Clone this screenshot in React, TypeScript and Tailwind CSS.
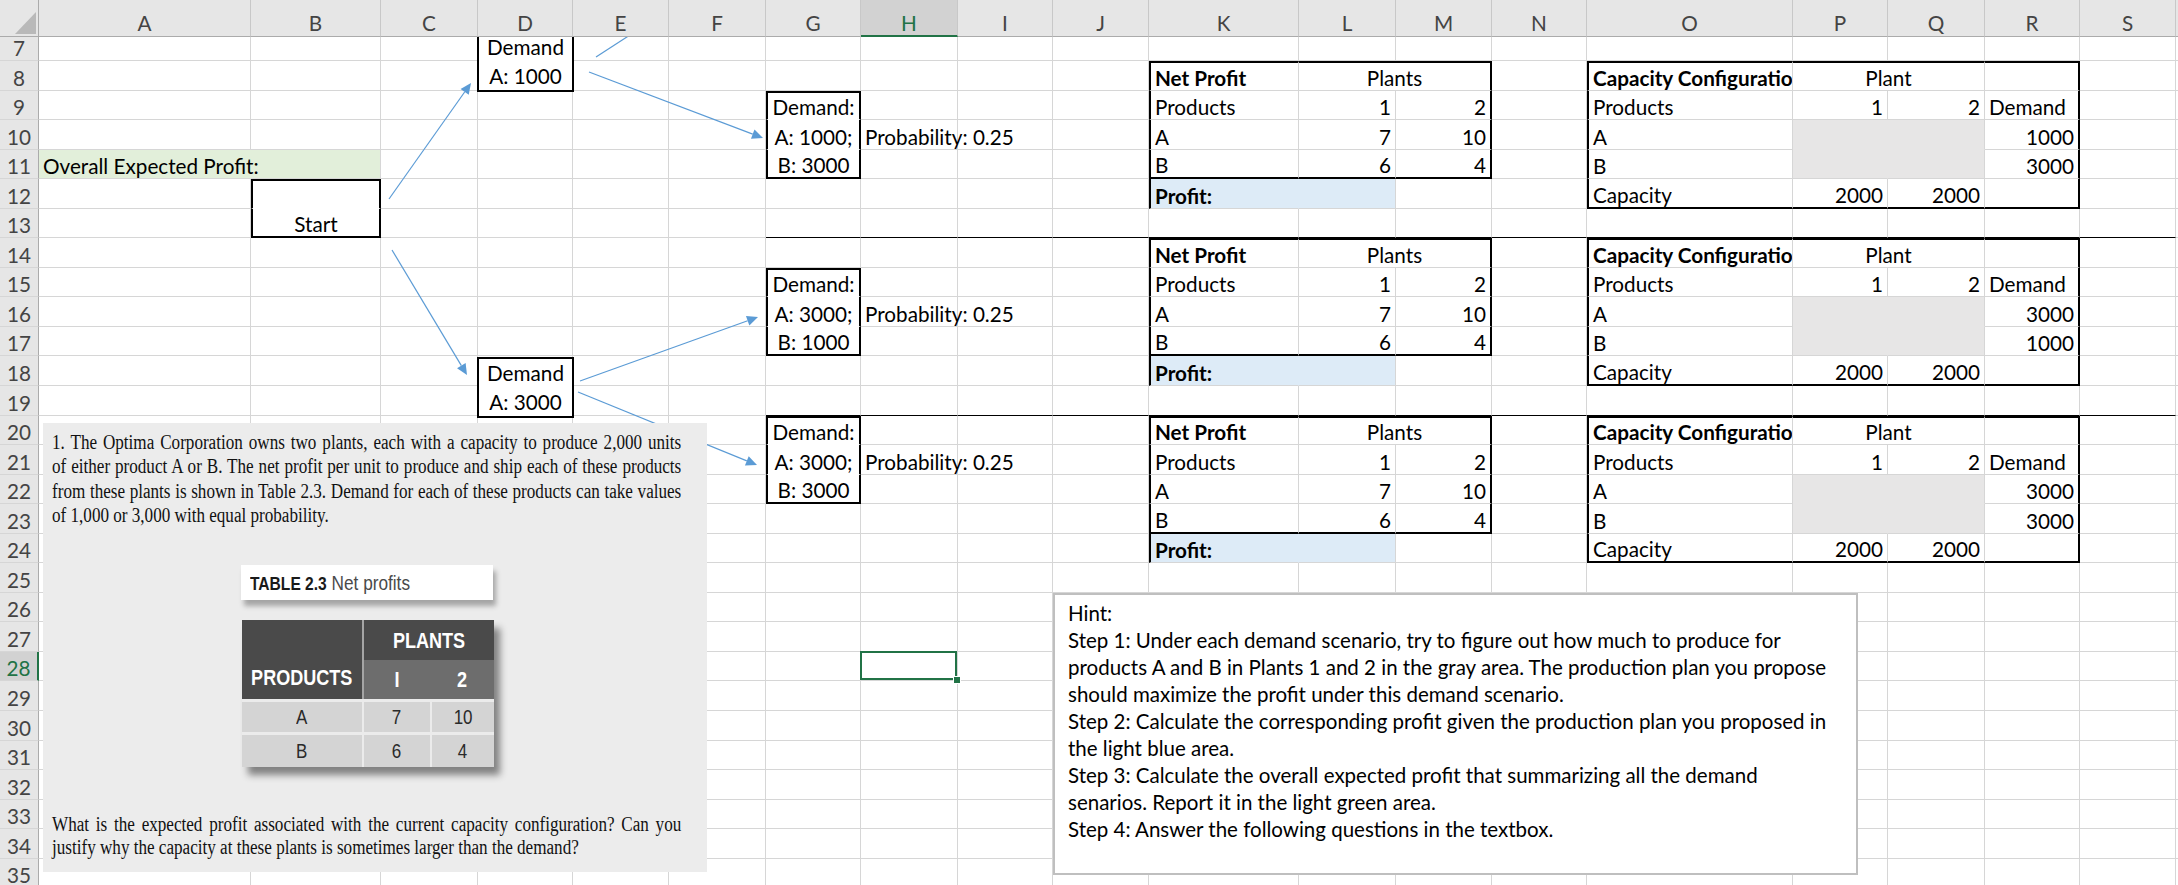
import React from "react";

const LETTERS = ["A","B","C","D","E","F","G","H","I","J","K","L","M","N","O","P","Q","R","S","T"];
const col = (l: string) => LETTERS.indexOf(l);

type Fill = { bg: string; br: string; bb: string };
const GREEN: Fill = { bg: "bg-[#e2efda]", br: "border-r-[#e2efda]", bb: "border-b-[#e2efda]" };
const BLUE: Fill = { bg: "bg-[#ddebf7]", br: "border-r-[#ddebf7]", bb: "border-b-[#ddebf7]" };
const GRAY: Fill = { bg: "bg-[#e7e6e6]", br: "border-r-[#e7e6e6]", bb: "border-b-[#e7e6e6]" };
const WHITE: Fill = { bg: "bg-white", br: "border-r-white", bb: "border-b-white" };

type Cell = { t?: string; a?: "l" | "r" | "c"; b?: boolean; span?: number; fill?: Fill; clip?: boolean };
const cells: Record<string, Cell> = {};
const key = (l: string, r: number) => `${l}${r}`;
const put = (l: string, r: number, c: Cell) => {
  cells[key(l, r)] = { ...(cells[key(l, r)] || {}), ...c };
};

put("A", 11, { t: "Overall Expected Profit:", fill: GREEN });
put("B", 11, { fill: GREEN });
put("B", 12, { fill: WHITE });
put("B", 13, { t: "Start", a: "c", fill: WHITE });

const SCEN = [
  { r0: 8, g: 9, dA: "1000", dB: "3000" },
  { r0: 14, g: 15, dA: "3000", dB: "1000" },
  { r0: 20, g: 20, dA: "3000", dB: "3000" },
];

for (const s of SCEN) {
  const r = s.r0;
  put("K", r, { t: "Net Profit", b: true });
  put("L", r, { t: "Plants", a: "c", span: 2 });
  put("K", r + 1, { t: "Products" });
  put("L", r + 1, { t: "1", a: "r" });
  put("M", r + 1, { t: "2", a: "r" });
  put("K", r + 2, { t: "A" });
  put("L", r + 2, { t: "7", a: "r" });
  put("M", r + 2, { t: "10", a: "r" });
  put("K", r + 3, { t: "B" });
  put("L", r + 3, { t: "6", a: "r" });
  put("M", r + 3, { t: "4", a: "r" });
  put("K", r + 4, { t: "Profit:", b: true, fill: BLUE });
  put("L", r + 4, { fill: BLUE });

  put("O", r, { t: "Capacity Configuration", b: true, clip: true });
  put("P", r, { t: "Plant", a: "c", span: 2 });
  put("O", r + 1, { t: "Products" });
  put("P", r + 1, { t: "1", a: "r" });
  put("Q", r + 1, { t: "2", a: "r" });
  put("R", r + 1, { t: "Demand" });
  put("O", r + 2, { t: "A" });
  put("P", r + 2, { fill: GRAY });
  put("Q", r + 2, { fill: GRAY });
  put("R", r + 2, { t: s.dA, a: "r" });
  put("O", r + 3, { t: "B" });
  put("P", r + 3, { fill: GRAY });
  put("Q", r + 3, { fill: GRAY });
  put("R", r + 3, { t: s.dB, a: "r" });
  put("O", r + 4, { t: "Capacity" });
  put("P", r + 4, { t: "2000", a: "r" });
  put("Q", r + 4, { t: "2000", a: "r" });

  const g = s.g;
  put("G", g, { t: "Demand:", a: "c", fill: WHITE });
  put("G", g + 1, { t: `A: ${s.dA};`, a: "c", fill: WHITE });
  put("G", g + 2, { t: `B: ${s.dB}`, a: "c", fill: WHITE });
  put("H", g + 1, { t: "Probability: 0.25" });
}

// c1, r1, c2, r2
const RECTS: [number, number, number, number][] = [
  [col("B"), 12, col("B"), 13],
  [col("G"), 9, col("G"), 11],
  [col("G"), 15, col("G"), 17],
  [col("G"), 20, col("G"), 22],
  [col("K"), 8, col("M"), 11],
  [col("K"), 14, col("M"), 17],
  [col("K"), 20, col("M"), 23],
  [col("O"), 8, col("R"), 12],
  [col("O"), 14, col("R"), 18],
  [col("O"), 20, col("R"), 24],
];
const LEFT_ONLY: [number, number][] = [
  [col("K"), 12],
  [col("K"), 18],
  [col("K"), 24],
];

const ROWS = Array.from({ length: 29 }, (_, i) => i + 7);

function SheetCell({ r, c }: { r: number; c: number }) {
  const cell = cells[key(LETTERS[c], r)] || {};
  const span = cell.span || 1;
  const cEnd = c + span - 1;
  let tT = false, tB = false, tL = false, tR = false;
  for (const [c1, r1, c2, r2] of RECTS) {
    const inRows = r >= r1 && r <= r2;
    const inCols = c >= c1 && cEnd <= c2;
    if (inCols && r === r1) tT = true;
    if (inCols && r === r2) tB = true;
    if (inRows && c === c1) tL = true;
    if (inRows && cEnd === c2) tR = true;
  }
  if (LEFT_ONLY.some(([lc, lr]) => lc === c && lr === r)) tL = true;
  const thinB = (r === 13 || r === 19) && c >= col("G") && c <= col("S");
  const f = cell.fill;
  const right = cells[key(LETTERS[cEnd + 1] || "", r)];
  const below = cells[key(LETTERS[c], r + 1)];
  const rCls = tR
    ? "border-r-2 border-r-black"
    : f && right && right.fill === f
    ? `border-r ${f.br}`
    : "border-r border-r-[#d6d6d6]";
  const bCls = tB
    ? "border-b-2 border-b-black"
    : thinB
    ? "border-b border-b-black"
    : f && below && below.fill === f
    ? `border-b ${f.bb}`
    : "border-b border-b-[#d6d6d6]";
  const tCls = tT ? "border-t-2 border-t-black" : "";
  const lCls = tL ? "border-l-2 border-l-black" : "";
  const align = cell.a === "r" ? "justify-end" : cell.a === "c" ? "justify-center" : "justify-start";
  const selected = r === 28 && c === col("H");
  return (
    <div
      className={`flex items-end pb-0 px-[4px] min-w-0 whitespace-nowrap leading-[24px] ${align} ${rCls} ${bCls} ${tCls} ${lCls} ${f ? f.bg : ""} ${cell.span === 2 ? "col-span-2" : ""} ${cell.clip ? "overflow-hidden" : ""} ${selected ? "relative" : ""}`}
    >
      {cell.t ? <span className={`relative ${cell.b ? "font-bold" : ""}`}>{cell.t}</span> : null}
      {selected ? (
        <>
          <div className="absolute -left-px -top-px w-[calc(100%+1px)] h-[calc(100%+1px)] border-2 border-[#217346]" />
          <div className="absolute -right-[4px] -bottom-[4px] w-[8px] h-[8px] bg-[#217346] border border-white" />
        </>
      ) : null}
    </div>
  );
}

function Sheet() {
  return (
    <div className="grid grid-cols-[39px_212px_130px_97px_95px_96px_97px_95px_97px_95px_96px_150px_97px_96px_95px_206px_95px_97px_95px_96px_100px] grid-rows-[37px_24px_repeat(28,29.55px)]">
      <div className="relative z-20 bg-[#e6e6e6] border-b border-b-[#ababab] border-r border-r-[#ababab]">
        <svg className="absolute left-0 top-0" width="39" height="37" viewBox="0 0 39 37">
          <polygon points="15,34 36,34 36,12" fill="#b9b9b9" />
        </svg>
      </div>
      {LETTERS.map((l) =>
        l === "H" ? (
          <div
            key={l}
            className="relative z-20 flex items-end justify-center leading-[24px] pb-0 bg-[#d2d2d2] text-[#217346] border-b-2 border-b-[#217346] border-r border-r-[#c8c8c8]"
          >
            {l}
          </div>
        ) : (
          <div
            key={l}
            className="relative z-20 flex items-end justify-center leading-[24px] pb-[1px] bg-[#e6e6e6] text-[#444444] border-b border-b-[#ababab] border-r border-r-[#c8c8c8]"
          >
            {l}
          </div>
        )
      )}
      {ROWS.map((r) => (
        <React.Fragment key={r}>
          {r === 28 ? (
            <div className="relative z-20 flex items-end justify-center leading-[24px] pb-0 bg-[#d2d2d2] text-[#217346] border-b border-b-[#d6d6d6] border-r-2 border-r-[#217346]">
              {r}
            </div>
          ) : (
            <div className="relative z-20 flex items-end justify-center leading-[24px] pb-0 bg-[#e6e6e6] text-[#444444] border-b border-b-[#d6d6d6] border-r border-r-[#ababab]">
              {r}
            </div>
          )}
          {LETTERS.map((l, c) => {
            const prev = c > 0 ? cells[key(LETTERS[c - 1], r)] : undefined;
            if (prev && prev.span === 2) return null;
            return <SheetCell key={l} r={r} c={c} />;
          })}
        </React.Fragment>
      ))}
    </div>
  );
}

function Arrows() {
  const lines: [number, number, number, number, boolean][] = [
    [389, 199, 471, 83, true],
    [392, 250, 467, 375, true],
    [589, 72, 763, 138, true],
    [596, 57, 684, 0, false],
    [580, 381, 758, 317, true],
    [578, 392, 757, 465, true],
  ];
  return (
    <svg className="absolute left-0 top-0 z-10 pointer-events-none" width="2178" height="885" viewBox="0 0 2178 885">
      {lines.map(([x1, y1, x2, y2, head], i) => {
        const dx = x2 - x1, dy = y2 - y1;
        const len = Math.hypot(dx, dy);
        const ux = dx / len, uy = dy / len;
        const L = 11, W = 5;
        const bx = x2 - ux * L, by = y2 - uy * L;
        const pts = `${x2},${y2} ${bx - uy * W},${by + ux * W} ${bx + uy * W},${by - ux * W}`;
        return (
          <g key={i}>
            <line x1={x1} y1={y1} x2={head ? bx : x2} y2={head ? by : y2} stroke="#5b9bd5" strokeWidth={1.2} />
            {head ? <polygon points={pts} fill="#5b9bd5" /> : null}
          </g>
        );
      })}
    </svg>
  );
}

const PARA = [
  "1. The Optima Corporation owns two plants, each with a capacity to produce 2,000 units",
  "of either product A or B. The net profit per unit to produce and ship each of these products",
  "from these plants is shown in Table 2.3. Demand for each of these products can take values",
  "of 1,000 or 3,000 with equal probability.",
];
const QUESTION = [
  "What is the expected profit associated with the current capacity configuration? Can you",
  "justify why the capacity at these plants is sometimes larger than the demand?",
];
const HINT = [
  "Hint:",
  "Step 1: Under each demand scenario, try to figure out how much to produce for",
  "products A and B in Plants 1 and 2 in the gray area. The production plan you propose",
  "should maximize the profit under this demand scenario.",
  "Step 2: Calculate the corresponding profit given the production plan you proposed in",
  "the light blue area.",
  "Step 3: Calculate the overall expected profit that summarizing all the demand",
  "senarios. Report it in the light green area.",
  "Step 4: Answer the following questions in the textbox.",
];

function Picture() {
  return (
    <div className="absolute left-[43px] top-[423px] z-10 w-[664px] h-[449px] overflow-hidden bg-[#ececec] text-[#111111]">
      <div className="ml-[9px] mt-[7px] w-[736px] origin-top-left scale-x-[0.855] font-['Liberation_Serif',serif] text-[20px] leading-[24.3px]">
        {PARA.map((l, i) => (
          <div key={i} className={`whitespace-nowrap ${i < 3 ? "text-justify [text-align-last:justify]" : ""}`}>
            {l}
          </div>
        ))}
      </div>
      <div className="ml-[198px] mt-[38px] w-[252px] h-[35px] flex items-center pl-[9px] bg-white shadow-[3px_6px_5px_rgba(0,0,0,0.3)] font-['Liberation_Sans',sans-serif]">
        <span className="inline-block origin-left scale-x-[0.82] whitespace-nowrap">
          <span className="font-bold text-[19px] text-[#1a1a1a]">TABLE 2.3</span>
          <span className="text-[21px] text-[#4a4a4a]"> Net profits</span>
        </span>
      </div>
      <div className="ml-[199px] mt-[20px] w-[252px] shadow-[6px_8px_7px_rgba(0,0,0,0.45)] font-['Liberation_Sans',sans-serif]">
        <div className="flex h-[79px]">
          <div className="w-[120px] flex items-end justify-center pb-[5px] bg-[#4a4a4a] text-white font-bold text-[22px]">
            <span className="inline-block scale-x-[0.82]">PRODUCTS</span>
          </div>
          <div className="w-[2px] bg-[#a5a5a5]" />
          <div className="w-[130px] flex flex-col">
            <div className="h-[40px] flex items-center justify-center bg-[#4a4a4a] text-white font-bold text-[22px]">
              <span className="inline-block scale-x-[0.82]">PLANTS</span>
            </div>
            <div className="h-[39px] flex bg-[#6d6d6d] text-white font-bold text-[22px]">
              <div className="w-[66px] flex items-center justify-center">
                <span className="inline-block scale-x-[0.82]">I</span>
              </div>
              <div className="flex-1 flex items-center justify-center">
                <span className="inline-block scale-x-[0.82]">2</span>
              </div>
            </div>
          </div>
        </div>
        <div className="h-[3px] bg-[#ebebeb]" />
        <div className="flex h-[30px] text-[20px] text-[#2a2a2a]">
          <div className="w-[120px] flex items-center justify-center bg-[#d4d4d4]">
            <span className="inline-block scale-x-[0.85]">A</span>
          </div>
          <div className="w-[2px] bg-[#ebebeb]" />
          <div className="w-[66px] flex items-center justify-center bg-[#d4d4d4]">
            <span className="inline-block scale-x-[0.85]">7</span>
          </div>
          <div className="w-[2px] bg-[#ebebeb]" />
          <div className="w-[62px] flex items-center justify-center bg-[#d4d4d4]">
            <span className="inline-block scale-x-[0.85]">10</span>
          </div>
        </div>
        <div className="h-[3px] bg-[#ebebeb]" />
        <div className="flex h-[32px] text-[20px] text-[#2a2a2a]">
          <div className="w-[120px] flex items-center justify-center bg-[#d4d4d4]">
            <span className="inline-block scale-x-[0.85]">B</span>
          </div>
          <div className="w-[2px] bg-[#ebebeb]" />
          <div className="w-[66px] flex items-center justify-center bg-[#d4d4d4]">
            <span className="inline-block scale-x-[0.85]">6</span>
          </div>
          <div className="w-[2px] bg-[#ebebeb]" />
          <div className="w-[62px] flex items-center justify-center bg-[#d4d4d4]">
            <span className="inline-block scale-x-[0.85]">4</span>
          </div>
        </div>
      </div>
      <div className="ml-[9px] mt-[46px] w-[736px] origin-top-left scale-x-[0.855] font-['Liberation_Serif',serif] text-[20px] leading-[23px]">
        {QUESTION.map((l, i) => (
          <div key={i} className={`whitespace-nowrap ${i === 0 ? "text-justify [text-align-last:justify]" : ""}`}>
            {l}
          </div>
        ))}
      </div>
    </div>
  );
}

function Overlays() {
  return (
    <>
      <Arrows />
      <div className="absolute left-[477px] top-[31px] z-10 w-[97px] h-[61px] flex flex-col items-center justify-center bg-white border-2 border-black leading-[29px]">
        <div>Demand</div>
        <div>A: 1000</div>
      </div>
      <div className="absolute left-[477px] top-[357px] z-10 w-[97px] h-[61px] flex flex-col items-center justify-center bg-white border-2 border-black leading-[29px]">
        <div>Demand</div>
        <div>A: 3000</div>
      </div>
      <Picture />
      <div className="absolute left-[1053px] top-[593px] z-10 w-[805px] h-[282px] bg-white border-2 border-[#bfbfbf] pl-[13px] pt-[5px] text-[20.5px] leading-[27px]">
        {HINT.map((l, i) => (
          <div key={i} className="whitespace-nowrap">
            {l}
          </div>
        ))}
      </div>
    </>
  );
}

export default function App() {
  return (
    <div className="relative w-[2178px] h-[885px] overflow-hidden bg-white font-['Lato',sans-serif] text-[20.7px] text-black">
      <Sheet />
      <Overlays />
    </div>
  );
}
